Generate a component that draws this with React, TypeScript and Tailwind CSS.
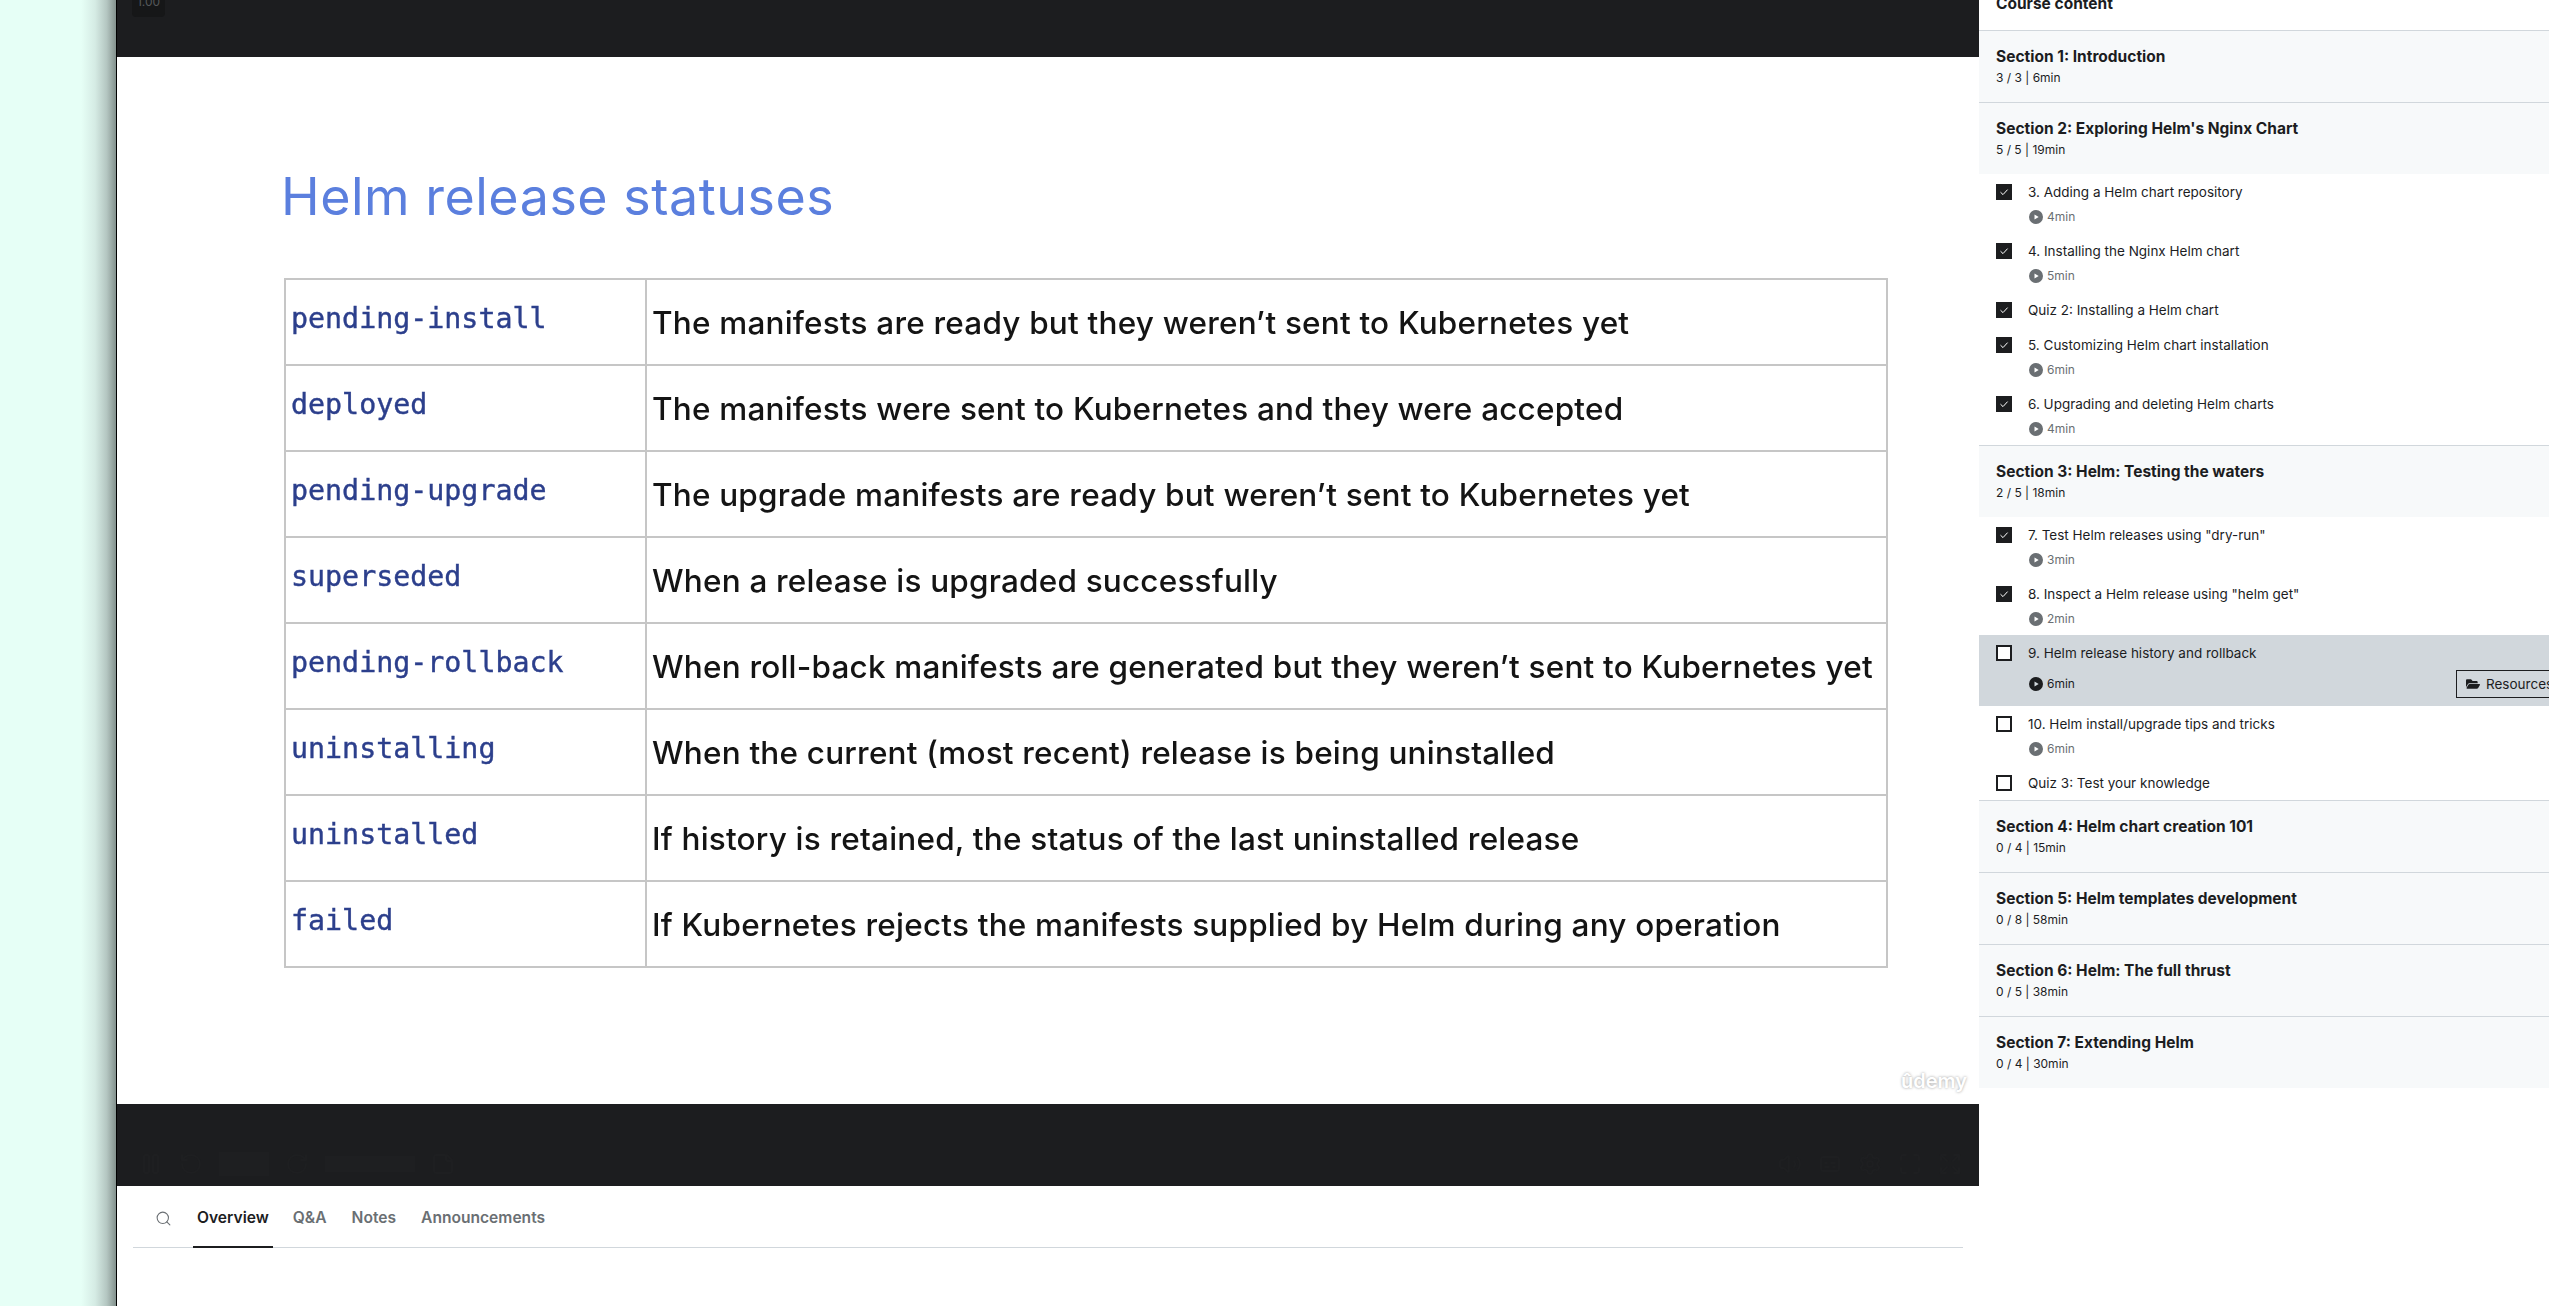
import { Search, Pause, RotateCcw, RotateCw, Volume2, Captions, Settings, Expand, Maximize, StickyNote } from "lucide-react";
import { FaFolderOpen } from "react-icons/fa";

type Lecture = { title: string; time?: string; done: boolean; active?: boolean };
type Section = { title: string; meta: string; lectures?: Lecture[] };

const rows = [
  ["pending-install", "The manifests are ready but they weren’t sent to Kubernetes yet"],
  ["deployed", "The manifests were sent to Kubernetes and they were accepted"],
  ["pending-upgrade", "The upgrade manifests are ready but weren’t sent to Kubernetes yet"],
  ["superseded", "When a release is upgraded successfully"],
  ["pending-rollback", "When roll-back manifests are generated but they weren’t sent to Kubernetes yet"],
  ["uninstalling", "When the current (most recent) release is being uninstalled"],
  ["uninstalled", "If history is retained, the status of the last uninstalled release"],
  ["failed", "If Kubernetes rejects the manifests supplied by Helm during any operation"],
];

const sections: Section[] = [
  { title: "Section 1: Introduction", meta: "3 / 3 | 6min" },
  {
    title: "Section 2: Exploring Helm's Nginx Chart",
    meta: "5 / 5 | 19min",
    lectures: [
      { title: "3. Adding a Helm chart repository", time: "4min", done: true },
      { title: "4. Installing the Nginx Helm chart", time: "5min", done: true },
      { title: "Quiz 2: Installing a Helm chart", done: true },
      { title: "5. Customizing Helm chart installation", time: "6min", done: true },
      { title: "6. Upgrading and deleting Helm charts", time: "4min", done: true },
    ],
  },
  {
    title: "Section 3: Helm: Testing the waters",
    meta: "2 / 5 | 18min",
    lectures: [
      { title: '7. Test Helm releases using "dry-run"', time: "3min", done: true },
      { title: '8. Inspect a Helm release using "helm get"', time: "2min", done: true },
      { title: "9. Helm release history and rollback", time: "6min", done: false, active: true },
      { title: "10. Helm install/upgrade tips and tricks", time: "6min", done: false },
      { title: "Quiz 3: Test your knowledge", done: false },
    ],
  },
  { title: "Section 4: Helm chart creation 101", meta: "0 / 4 | 15min" },
  { title: "Section 5: Helm templates development", meta: "0 / 8 | 58min" },
  { title: "Section 6: Helm: The full thrust", meta: "0 / 5 | 38min" },
  { title: "Section 7: Extending Helm", meta: "0 / 4 | 30min" },
];

function PlayIcon({ className }: { className: string }) {
  return (
    <svg viewBox="0 0 14 14" className={className}>
      <path
        fill="currentColor"
        fillRule="evenodd"
        d="M7 0a7 7 0 1 1 0 14A7 7 0 0 1 7 0ZM5.5 4.4v5.2L9.7 7Z"
      />
    </svg>
  );
}

function Checkbox({ done }: { done: boolean }) {
  if (done) {
    return (
      <div className="w-4 h-4 shrink-0 bg-[#1c1d1f] flex items-center justify-center">
        <svg viewBox="0 0 10 10" className="w-[10px] h-[10px]">
          <path d="M1.5 5.2 4 7.6 8.6 2.6" fill="none" stroke="white" strokeWidth="1" />
        </svg>
      </div>
    );
  }
  return <div className="w-4 h-4 shrink-0 border-2 border-[#1c1d1f] bg-white" />;
}

function LectureRow({ lecture }: { lecture: Lecture }) {
  return (
    <div className={`flex gap-4 pl-[17px] pt-[10px] ${lecture.active ? "bg-[#d1d7dc]" : ""}`}>
      <Checkbox done={lecture.done} />
      <div className="flex-1 min-w-0">
        <div className="text-[13.5px] leading-4 text-[#1c1d1f] whitespace-nowrap">{lecture.title}</div>
        {lecture.time ? (
          <div className={`flex items-center justify-between mt-[9px] pb-2 ${lecture.active ? "h-9" : "h-6"}`}>
            <div className={`flex items-center gap-1 text-[12px] ${lecture.active ? "text-[#1c1d1f]" : "text-[#6a6f73]"}`}>
              <PlayIcon className="w-[14px] h-[14px] ml-[1px]" />
              <span>{lecture.time}</span>
            </div>
            {lecture.active ? (
              <div className="h-7 w-[110px] shrink-0 -mr-[17px] border border-[#1c1d1f] flex items-center gap-[6px] pl-[9px] text-[13.5px] text-[#1c1d1f]">
                <FaFolderOpen className="w-[14px] h-[14px] shrink-0" />
                <span>Resources</span>
              </div>
            ) : null}
          </div>
        ) : (
          <div className="h-[9px]" />
        )}
      </div>
    </div>
  );
}

function SectionBlock({ section, last }: { section: Section; last: boolean }) {
  return (
    <div className={last ? "" : "border-b border-[#d1d7dc]"}>
      <div className="h-[71px] bg-[#f7f9fa] pl-[17px] pt-4">
        <div className="text-[15.5px] leading-[19px] font-bold text-[#1c1d1f]">{section.title}</div>
        <div className="text-[12px] leading-4 mt-1 text-[#1c1d1f]">{section.meta}</div>
      </div>
      {section.lectures?.map((lecture) => (
        <LectureRow key={lecture.title} lecture={lecture} />
      ))}
    </div>
  );
}

function Sidebar() {
  return (
    <aside className="w-[570px] shrink-0 h-full overflow-hidden bg-white font-['Inter',sans-serif]">
      <div className="h-[31px] border-b border-[#d1d7dc] flex items-end pl-[17px] pb-[14px]">
        <span className="text-[15.5px] leading-6 font-bold text-[#1c1d1f]">Course content</span>
      </div>
      {sections.map((section, i) => (
        <SectionBlock key={section.title} section={section} last={i === sections.length - 1} />
      ))}
    </aside>
  );
}

function Slide() {
  return (
    <div className="relative h-[1047px] bg-white pt-[112px] pl-[167px]">
      <div className="blur-[0.4px]">
        <h1 className="h-14 -ml-[3px] text-[52px] leading-[56px] tracking-[0.5px] text-[#5b7fde] font-['Inter',sans-serif] whitespace-nowrap">
          Helm release statuses
        </h1>
        <div className="mt-[53px] w-[1604px] border-t-2 border-l-2 border-[#c6c6c6]">
          {rows.map(([status, text]) => (
            <div key={status} className="h-[86px] flex border-b-2 border-r-2 border-[#c6c6c6]">
              <div className="w-[361px] shrink-0 border-r-2 border-[#c6c6c6] pl-[5px] pb-[5px] flex items-center text-[28.3px] text-[#2c3f8c] [-webkit-text-stroke:0.4px_#2c3f8c] font-['DejaVu_Sans_Mono',monospace]">
                {status}
              </div>
              <div className="pl-[5px] pt-[2px] flex items-center text-[31.5px] tracking-[0.2px] font-medium text-[#141414] font-['Inter',sans-serif] whitespace-nowrap">
                {text}
              </div>
            </div>
          ))}
        </div>
      </div>
      <span className="absolute right-[12px] bottom-[8px] text-[20px] font-semibold text-white font-['Inter',sans-serif] [text-shadow:0_0_3px_#9a9a9a]">
        ûdemy
      </span>
    </div>
  );
}

// the player controls are almost invisible on the dark bar
function FaintControls() {
  return (
    <div className="h-[82px] bg-[#1c1d1f] flex items-end justify-between pb-[10px] pl-[22px] pr-[17px] text-[#1e1f21]">
      <div className="flex items-center gap-4">
        <Pause className="w-6 h-6" />
        <RotateCcw className="w-6 h-6" />
        <div className="w-[50px] h-6 bg-[#1e1f21]" />
        <RotateCw className="w-6 h-6" />
        <div className="w-[90px] h-4 bg-[#1e1f21]" />
        <StickyNote className="w-6 h-6" />
      </div>
      <div className="flex items-center gap-4">
        <Volume2 className="w-6 h-6" />
        <Captions className="w-6 h-6" />
        <Settings className="w-6 h-6" />
        <Maximize className="w-6 h-6" />
        <Expand className="w-6 h-6" />
      </div>
    </div>
  );
}

function Tabs() {
  return (
    <div className="mx-[16px] h-[62px] border-b border-[#d1d7dc] flex items-start pt-[20px] text-[15.6px] font-semibold text-[#6a6f73] font-['Inter',sans-serif]">
      <Search className="w-[17px] h-[17px] ml-[22px] mr-[21px] mt-[4px]" strokeWidth={1.5} />
      <div className="relative px-1 text-[#1c1d1f]">
        Overview
        <div className="absolute left-0 right-0 top-[40px] h-[2px] bg-[#1c1d1f]" />
      </div>
      <div className="ml-[20px]">Q&amp;A</div>
      <div className="ml-[25px]">Notes</div>
      <div className="ml-[25px]">Announcements</div>
    </div>
  );
}

export default function App() {
  return (
    <div className="w-[2549px] h-[1306px] overflow-hidden flex bg-[#e6fff6]">
      <div className="w-[116px] shrink-0 bg-[linear-gradient(to_right,#e6fff6_70%,#d5ebe4_82%,#b4c6c1_92%,#83918d_100%)]" />
      <main className="w-[1863px] shrink-0 border-l border-black bg-white overflow-hidden">
        <div className="h-[57px] bg-[#1c1d1f] pl-[15px]">
          <div className="w-[33px] h-[17px] bg-[#161718] rounded-b flex items-end justify-center pb-[9px] text-[12px] leading-3 text-[#55575a] font-['Inter',sans-serif]">
            1.00
          </div>
        </div>
        <Slide />
        <FaintControls />
        <Tabs />
        <div className="pl-[56px] mt-[57px] h-4 text-[24px] leading-6 font-bold text-[#1c1d1f] font-['Inter',sans-serif]">
          About this course
        </div>
      </main>
      <Sidebar />
    </div>
  );
}
